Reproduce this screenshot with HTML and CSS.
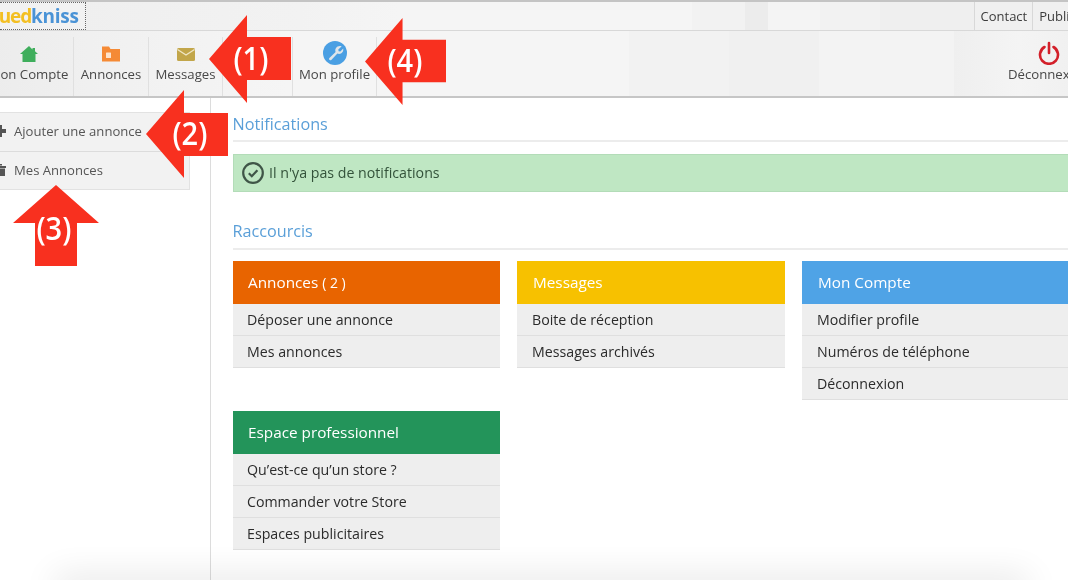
FILE: index.html
```html
<!DOCTYPE html>
<html lang="fr">
<head>
<meta charset="utf-8">
<title>Ouedkniss</title>
<link rel="stylesheet" href="styles.css">
</head>
<body>
<div class="page">
  <header class="topbar">
    <a class="logo"><span class="logo-oued">oued</span><span class="logo-kniss">kniss</span></a>
    <nav class="toplinks">
      <a class="toplink">Contact</a>
      <a class="toplink">Publicité</a>
    </nav>
  </header>
  <nav class="toolbar">
    <a class="tool tool-compte">
      <svg class="tool-icon" viewBox="0 0 20 18"><path fill="#3fae5c" d="M10 1 1 9h2.500v8h13V9H19l-3-2.700V3h-2.500v1.500z"/></svg>
      <span>Mon Compte</span>
    </a>
    <a class="tool tool-annonces">
      <svg class="tool-icon" viewBox="0 0 20 18"><path fill="#f58a35" d="M1 1.500h7l1.500 2.500H19v12.500H1z"/><rect x="5" y="7.500" width="5" height="5.500" rx=".5" fill="#fde3cc"/></svg>
      <span>Annonces</span>
    </a>
    <a class="tool tool-messages">
      <svg class="tool-icon" viewBox="0 0 20 18"><rect x="1" y="3" width="18" height="13" rx="1.500" fill="#c2a64a"/><path d="M1.500 4.500 10 10l8.500-5.500" fill="none" stroke="#efe6c4" stroke-width="1.400"/></svg>
      <span>Messages</span>
    </a>
    <a class="tool tool-blank"></a>
    <a class="tool tool-profile">
      <svg class="tool-icon tool-icon-lg" viewBox="0 0 24 24"><circle cx="12" cy="12" r="12" fill="#4a9fe3"/><path fill="#dfe5ea" d="M18.500 5.500 15.300 8.400l.3 1.800 1.800.3 2.800-3c.4 2.200-.4 4-2.200 5-1.300.6-2.500.6-3.600.1l-6.100 6.300c-1.200 1.100-3.100-.6-1.900-1.900l6.200-6.100c-.5-1.200-.4-2.600.3-3.700 1-1.700 3-2.600 5.600-2z"/></svg>
      <span>Mon profile</span>
    </a>
    <a class="tool tool-logout">
      <svg class="tool-icon tool-icon-lg" viewBox="0 0 24 24"><path fill="none" stroke="#d3202a" stroke-width="2.600" stroke-linecap="round" d="M7.500 6a9 9 0 1 0 9 0M12 2v10"/></svg>
      <span>Déconnexion</span>
    </a>
  </nav>
  <div class="body">
    <aside class="sidebar">
      <ul class="sidemenu">
        <li class="sideitem">
          <svg class="side-icon" viewBox="0 0 14 14"><path fill="#555" d="M5 1h4v4h4v4H9v4H5V9H1V5h4z"/></svg>
          <span>Ajouter une annonce</span>
        </li>
        <li class="sideitem">
          <svg class="side-icon" viewBox="0 0 14 14"><path fill="#555" d="M1 3h12v2H1zM2 5.500h10V13H2zM5 1h4v1.500H5z"/></svg>
          <span>Mes Annonces</span>
        </li>
      </ul>
    </aside>
    <main class="content">
      <h2 class="section-title">Notifications</h2>
      <div class="alert">
        <svg class="alert-icon" viewBox="0 0 22 22"><circle cx="11" cy="11" r="9.800" fill="none" stroke="#3f5547" stroke-width="2.200"/><path d="m6.800 11.200 3 3 5.600-6" fill="none" stroke="#3f5547" stroke-width="2.200"/></svg>
        <span>Il n'ya pas de notifications</span>
      </div>
      <h2 class="section-title section-shortcuts">Raccourcis</h2>
      <div class="cards">
        <section class="card">
          <h3 class="card-head head-orange">Annonces <small>( 2 )</small></h3>
          <a class="card-row">Déposer une annonce</a>
          <a class="card-row">Mes annonces</a>
        </section>
        <section class="card card-inset">
          <h3 class="card-head head-yellow">Messages</h3>
          <a class="card-row">Boite de réception</a>
          <a class="card-row">Messages archivés</a>
        </section>
        <section class="card card-inset">
          <h3 class="card-head head-blue">Mon Compte</h3>
          <a class="card-row">Modifier profile</a>
          <a class="card-row">Numéros de téléphone</a>
          <a class="card-row">Déconnexion</a>
        </section>
        <section class="card">
          <h3 class="card-head head-green">Espace professionnel</h3>
          <a class="card-row">Qu’est-ce qu’un store ?</a>
          <a class="card-row">Commander votre Store</a>
          <a class="card-row">Espaces publicitaires</a>
        </section>
      </div>
    </main>
  </div>
  <div class="callout callout-1">
    <svg viewBox="0 0 82 88"><path class="arrow" d="M0 44 38 0v22h44v43H38v23z"/></svg>
    <span class="callout-label">(1)</span>
  </div>
  <div class="callout callout-2">
    <svg viewBox="0 0 82 88"><path class="arrow" d="M0 44 38 0v23h44v43H38v22z"/></svg>
    <span class="callout-label">(2)</span>
  </div>
  <div class="callout callout-3">
    <svg viewBox="0 0 86 81"><path class="arrow" d="M43 0 86 38H64v43H22V38H0z"/></svg>
    <span class="callout-label">(3)</span>
  </div>
  <div class="callout callout-4">
    <svg viewBox="0 0 82 88"><path class="arrow" d="M0 44 38 0v22h44v43H38v23z"/></svg>
    <span class="callout-label">(4)</span>
  </div>
</div>
</body>
</html>
```

FILE: styles.css
```css
* { box-sizing: border-box; }
html, body { margin: 0; padding: 0; }
body {
  font-family: "Open Sans", "Liberation Sans", sans-serif;
  color: #333;
  background: #fff;
}
a { color: inherit; text-decoration: none; }
ul { list-style: none; margin: 0; padding: 0; }
h2, h3 { margin: 0; font-weight: 400; }

.page {
  position: relative;
  width: 1068px;
  height: 580px;
  overflow: hidden;
  background: #fff;
  filter: blur(.3px);
}
.page::after {
  content: "";
  position: absolute;
  left: 55px;
  right: 40px;
  bottom: -20px;
  height: 20px;
  box-shadow: 0 -3px 34px rgba(0,0,0,.12);
  pointer-events: none;
}

/* top bar */
.topbar {
  display: flex;
  justify-content: space-between;
  height: 31px;
  border-top: 2px solid #c4c4c4;
  border-bottom: 1px solid #d8d8d8;
  background: linear-gradient(to right,
    #eeeeee 0, #f2f2f2 300px, #f5f5f5 400px, #f5f5f5 692px,
    #f2f2f2 692px, #f2f2f2 745px, #ececec 745px, #ececec 768px,
    #f4f4f4 768px, #f4f4f4 820px, #f2f2f2 820px, #f2f2f2 880px,
    #efefef 880px, #efefef 975px, #f0f0f0 975px);
  font-size: 13px;
}
.logo {
  width: 86px;
  height: 28px;
  display: flex;
  align-items: center;
  overflow: hidden;
  border: 1px dotted #666;
  border-left: 0;
  background: #f2f2f2;
  font-size: 19px;
  font-weight: 700;
}
.logo-oued { margin-left: -12px; color: #f3bf22; letter-spacing: -1.100px; }
.logo-kniss { color: #4a93d6; letter-spacing: -.3px; }
.toplinks { display: flex; margin-right: -28px; }
.toplink {
  display: flex;
  align-items: center;
  padding: 0 5px 0 6px;
  border-left: 1px solid #d8d8d8;
  color: #3c3c3c;
}

/* toolbar */
.toolbar {
  display: flex;
  height: 67px;
  margin-left: -11px;
  margin-right: -26px;
  border-bottom: 2px solid #c6c6c6;
  background: linear-gradient(to right,
    #ececec 0, #f0f0f0 100px, #f5f5f5 300px, #f5f5f5 640px,
    #f2f2f2 640px, #f2f2f2 740px, #f0f0f0 740px, #f0f0f0 830px,
    #f3f3f3 830px, #f3f3f3 965px, #efefef 965px, #f4f4f4 1030px, #efefef 1100px);
  font-size: 13.200px;
  color: #484848;
}
.tool {
  display: flex;
  flex-direction: column;
  align-items: center;
  justify-content: flex-start;
  height: 59px;
  margin-top: 6px;
  padding-top: 8px;
  border-right: 1px solid #e0e0e0;
  white-space: nowrap;
}
.tool span { line-height: 18px; margin-top: 2px; }
.tool-icon { display: block; width: 20px; height: 18px; }
.tool-icon-lg { width: 24px; height: 24px; margin-top: -4px; margin-bottom: -2px; }
.tool-compte { width: 86px; margin-left: -1px; padding-right: 4px; }
.tool-annonces { width: 75px; }
.tool-messages { width: 74px; }
.tool-blank { width: 70px; }
.tool-profile { width: 84px; }
.tool-logout { margin-left: auto; width: 91px; border-right: 0; }

/* body */
.body { display: flex; height: 483px; }
.sidebar {
  flex: 0 0 211px;
  padding-top: 14px;
  border-right: 1px solid #dcdcdc;
}
.sidemenu {
  width: 190px;
  background: #f2f2f2;
  border: 1px solid #e2e2e2;
  border-left: 0;
  color: #555;
  font-size: 13.100px;
}
.sideitem {
  display: flex;
  align-items: center;
  gap: 7px;
  height: 38px;
  margin-left: -7px;
  padding: 0 0 2px 7px;
}
.sideitem + .sideitem { border-top: 1px solid #dcdcdc; }
.side-icon { width: 14px; height: 14px; flex: none; margin-left: -7px; }

.content { flex: 1; padding: 17px 0 0 22px; min-width: 0; margin-right: -10px; }
.section-title {
  height: 27px;
  border-bottom: 2px solid #ececec;
  color: #5a9fd8;
  font-size: 16.200px;
  line-height: 18px;
  margin-left: -.5px;
}
.alert {
  display: flex;
  align-items: center;
  gap: 5px;
  height: 38px;
  margin-top: 12px;
  padding: 0 0 2px 8px;
  background: #bfe7c3;
  border: 1px solid #b3dcb8;
  color: #33523a;
  font-size: 14.200px;
}
.alert-icon { width: 22px; height: 22px; flex: none; margin-top: 2px; }
.section-shortcuts { height: 28px; margin-top: 30px; }

.cards {
  display: grid;
  grid-template-columns: 267px 268px 268px;
  column-gap: 17px;
  row-gap: 11px;
  margin-top: 11px;
  align-items: start;
}
.card-head {
  height: 43px;
  padding-left: 15px;
  color: #fff;
  font-size: 15.300px;
  line-height: 42px;
}
.card-head small { font-size: 14px; }
.head-orange { background: #e86400; }
.head-yellow { background: #f7c100; }
.head-blue { background: #4fa3e6; }
.head-green { background: #23945a; }
.card-row {
  display: block;
  height: 32px;
  padding-left: 14px;
  background: #eeeeee;
  border-bottom: 1px solid #dfdfdf;
  color: #2b2b2b;
  font-size: 14.200px;
  line-height: 32px;
}
.card-inset .card-head { padding-left: 16px; }
.card-inset .card-row { padding-left: 15px; }

/* annotation arrows */
.callout { position: absolute; }
.callout svg { display: block; width: 100%; height: 100%; }
.arrow { fill: #f8301f; }
.callout-label {
  position: absolute;
  top: 0;
  bottom: 0;
  display: flex;
  align-items: center;
  color: #fff;
  font-size: 33px;
  font-weight: 600;
  line-height: 1;
  transform: translateY(-2px) scaleX(.88);
}
.callout-1 { left: 209px; top: 15px; width: 82px; height: 88px; }
.callout-1 .callout-label { left: 22px; }
.callout-2 { left: 146px; top: 90px; width: 82px; height: 88px; }
.callout-2 .callout-label { left: 24px; }
.callout-3 { left: 13px; top: 185px; width: 86px; height: 81px; }
.callout-3 .callout-label { left: 21px; top: 8px; }
.callout-4 { left: 365px; top: 18px; width: 81px; height: 87px; }
.callout-4 .callout-label { left: 20px; }
```
